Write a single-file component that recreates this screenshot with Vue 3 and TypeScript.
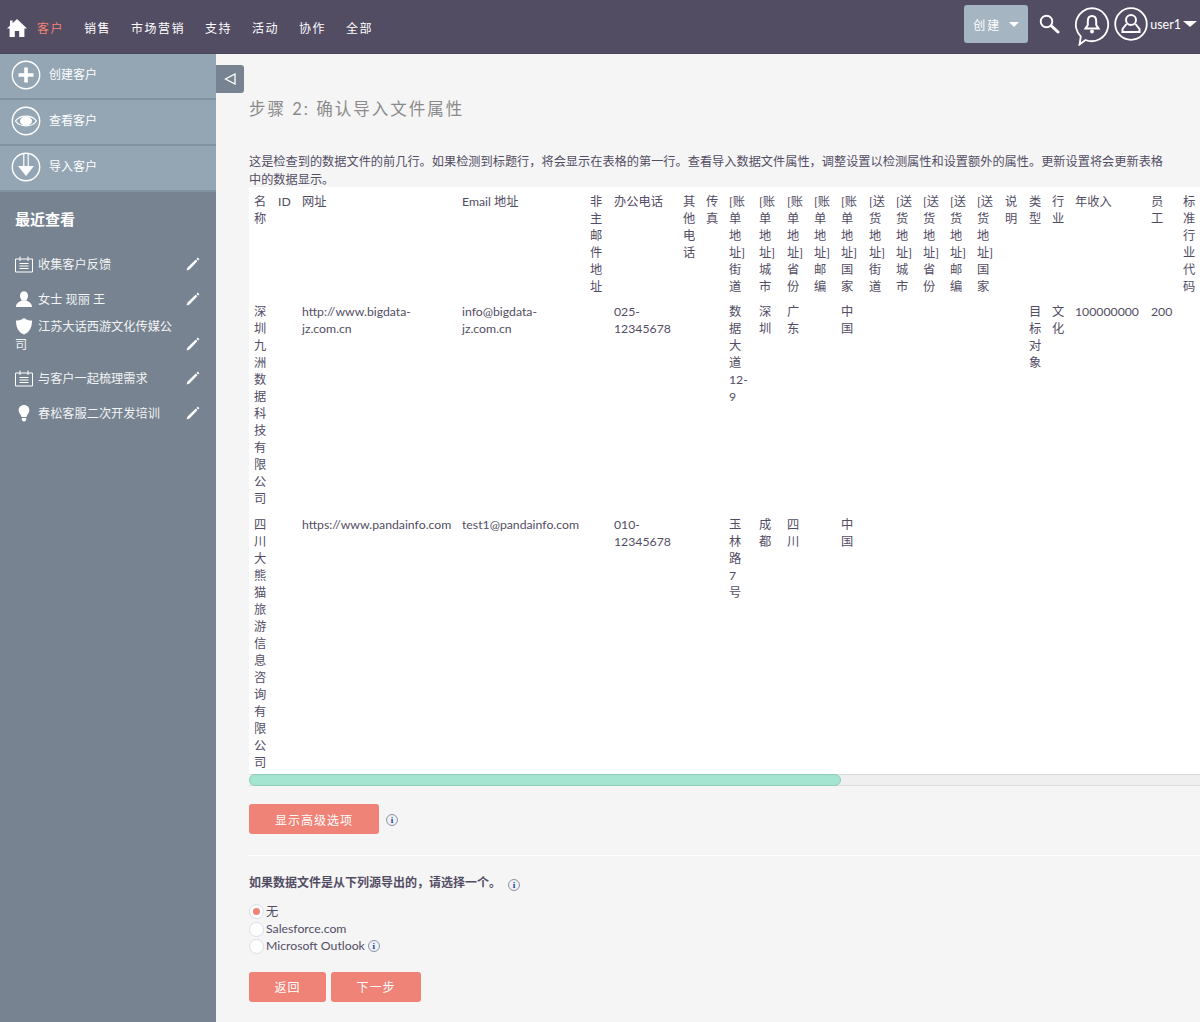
<script setup lang="ts">
const navItems = ['销售', '市场营销', '支持', '活动', '协作', '全部']

const actions = [
  { label: '创建客户', icon: 'plus' },
  { label: '查看客户', icon: 'eye' },
  { label: '导入客户', icon: 'down' },
]

const recent = [
  { label: '收集客户反馈', icon: 'note' },
  { label: '女士 现丽 王', icon: 'person' },
  { label: '江苏大话西游文化传媒公司', icon: 'shield', tall: true },
  { label: '与客户一起梳理需求', icon: 'note' },
  { label: '春松客服二次开发培训', icon: 'bulb' },
]

const colWidths = [24, 24, 160, 128, 24, 69, 23, 23, 30, 28, 27, 27, 28, 27, 27, 27, 27, 28, 24, 23, 23, 76, 32, 24, 574]

const headers = [
  '名称', 'ID', '网址', 'Email 地址', '非主邮件地址', '办公电话', '其他电话', '传真',
  '[账单地址]街道', '[账单地址]城市', '[账单地址]省份', '[账单地址]邮编', '[账单地址]国家',
  '[送货地址]街道', '[送货地址]城市', '[送货地址]省份', '[送货地址]邮编', '[送货地址]国家',
  '说明', '类型', '行业', '年收入', '员工', '标准行业代码', '',
]

const rows = [
  ['深圳九洲数据科技有限公司', '', 'http://www.bigdata-jz.com.cn', 'info@bigdata-jz.com.cn', '', '025-12345678', '', '',
    '数据大道12-9', '深圳', '广东', '', '中国', '', '', '', '', '', '', '目标对象', '文化', '100000000', '200', '', ''],
  ['四川大熊猫旅游信息咨询有限公司', '', 'https://www.pandainfo.com', 'test1@pandainfo.com', '', '010-12345678', '', '',
    '玉林路7号', '成都', '四川', '', '中国', '', '', '', '', '', '', '', '', '', '', '', ''],
]

const sources = ['无', 'Salesforce.com', 'Microsoft Outlook']
</script>

<template>
  <div class="page">
    <header class="topbar">
      <svg class="home" viewBox="0 0 20 20" width="20" height="20">
        <path d="M10 1 L20 10.5 L17.4 10.5 L17.4 19 L12.2 19 L12.2 13 L7.8 13 L7.8 19 L2.6 19 L2.6 10.5 L0 10.5 L3 7.6 L3 2.5 L5.6 2.5 L5.6 5.2 Z" fill="#fff" />
      </svg>
      <nav class="nav">
        <a class="nav-item active">客户</a>
        <a v-for="item in navItems" :key="item" class="nav-item">{{ item }}</a>
      </nav>
      <div class="top-right">
        <button class="create">创建<span class="caret"></span></button>
        <svg class="search" viewBox="0 0 21 20" width="21" height="20">
          <circle cx="7.5" cy="7.5" r="5.8" fill="none" stroke="#fff" stroke-width="1.9" />
          <path d="M12.5 12 L19 18" stroke="#fff" stroke-width="3" stroke-linecap="round" />
        </svg>
        <svg class="bell" viewBox="0 0 36 39" width="36" height="39">
          <path d="M18 1.2 A16.5 16.5 0 1 1 11.5 33 L5.5 37.5 L6.8 29.5 A16.5 16.5 0 0 1 18 1.2 Z" fill="none" stroke="#fff" stroke-width="1.8" />
          <path d="M18 9 C14.8 9 13.8 11.5 13.8 14 L13.8 18 L11.5 21.5 L24.5 21.5 L22.2 18 L22.2 14 C22.2 11.5 21.2 9 18 9 Z" fill="none" stroke="#fff" stroke-width="2" />
          <circle cx="18" cy="24.5" r="2" fill="#fff" />
        </svg>
        <svg class="avatar" viewBox="0 0 34 34" width="34" height="34">
          <circle cx="17" cy="17" r="15.8" fill="none" stroke="#fff" stroke-width="1.8" />
          <circle cx="17" cy="13" r="5" fill="none" stroke="#fff" stroke-width="2" />
          <path d="M12.5 17 L8.5 22 L8.5 25 L25.5 25 L25.5 22 L21.5 17" fill="none" stroke="#fff" stroke-width="2" />
        </svg>
        <span class="username">user1</span><span class="caret user-caret"></span>
      </div>
    </header>

    <div class="body">
      <aside class="sidebar">
        <a v-for="action in actions" :key="action.label" class="action">
          <svg viewBox="0 0 30 30" width="30" height="30">
            <circle cx="15" cy="15" r="13.7" fill="none" stroke="#fff" stroke-width="1.4" />
            <path v-if="action.icon === 'plus'" d="M15 7.5 V22.5 M7.5 15 H22.5" stroke="#fff" stroke-width="3.6" />
            <template v-else-if="action.icon === 'eye'">
              <path d="M4.5 15 C9 8.5 21 8.5 25.5 15 C21 21.5 9 21.5 4.5 15 Z" fill="none" stroke="#fff" stroke-width="1.3" />
              <ellipse cx="15" cy="15" rx="6" ry="4.6" fill="#fff" />
            </template>
            <template v-else>
              <path d="M12.8 1.5 V14 M17.2 1.5 V14" stroke="#fff" stroke-width="1.2" />
              <path d="M7 14 H23 L15 24 Z" fill="#fff" />
            </template>
          </svg>
          <span>{{ action.label }}</span>
        </a>

        <h2 class="recent-title">最近查看</h2>
        <ul class="recent">
          <li v-for="item in recent" :key="item.label" class="recent-item" :class="{ tall: item.tall }">
            <span class="recent-text">
              <svg class="recent-icon" viewBox="0 0 18 18" width="18" height="18">
                <template v-if="item.icon === 'note'">
                  <path d="M0.5 4 H17.5 V17 H0.5 Z" fill="none" stroke="#fff" stroke-width="1" />
                  <path d="M5 1.5 V6 M13 1.5 V6 M4.5 8.5 H13.5 M4.5 11 H13.5 M4.5 13.5 H13.5" stroke="#fff" stroke-width="1" />
                </template>
                <template v-else-if="item.icon === 'person'">
                  <ellipse cx="9" cy="6" rx="4" ry="4.8" fill="#fff" />
                  <path d="M1 17 C1 13 4.5 11.5 6.5 10.5 L11.5 10.5 C13.5 11.5 17 13 17 17 Z" fill="#fff" />
                </template>
                <path v-else-if="item.icon === 'shield'" d="M9 1 C11.5 3 14 3.5 17 3.5 C17 10 15 15 9 17.5 C3 15 1 10 1 3.5 C4 3.5 6.5 3 9 1 Z" fill="#fff" />
                <template v-else>
                  <path d="M9 1 C5.8 1 3.6 3.4 3.6 6.2 C3.6 9 6 10.4 6.6 13 L11.4 13 C12 10.4 14.4 9 14.4 6.2 C14.4 3.4 12.2 1 9 1 Z" fill="#fff" />
                  <path d="M6.8 14 H11.2 V16 L9.8 17.5 H8.2 L6.8 16 Z" fill="#fff" />
                </template>
              </svg>{{ item.label }}
            </span>
            <svg class="pencil" viewBox="0 0 14 14" width="14" height="14">
              <path d="M0.5 13.5 L1.5 10.5 L9.8 2.6 L11.4 4.2 L3.5 12.5 Z M10.5 1.9 L11.8 0.6 L13.4 2.2 L12.1 3.5 Z" fill="#fff" />
            </svg>
          </li>
        </ul>
      </aside>

      <main class="main">
        <button class="collapse" aria-label="collapse">
          <svg viewBox="0 0 12 12" width="12" height="12">
            <path d="M11 1 V11 L1.5 6 Z" fill="none" stroke="#fff" stroke-width="1.3" />
          </svg>
        </button>

        <h1 class="title">步骤 2: 确认导入文件属性</h1>
        <p class="intro">这是检查到的数据文件的前几行。如果检测到标题行，将会显示在表格的第一行。查看导入数据文件属性，调整设置以检测属性和设置额外的属性。更新设置将会更新表格中的数据显示。</p>

        <div class="table-wrap">
          <table class="data">
            <colgroup>
              <col v-for="(w, i) in colWidths" :key="i" :style="{ width: w + 'px' }" />
            </colgroup>
            <thead>
              <tr>
                <th v-for="(h, i) in headers" :key="i">{{ h }}</th>
              </tr>
            </thead>
            <tbody>
              <tr v-for="(row, r) in rows" :key="r">
                <td v-for="(cell, c) in row" :key="c">{{ cell }}</td>
              </tr>
            </tbody>
          </table>
        </div>
        <div class="scroll-track">
          <div class="scroll-thumb"></div>
        </div>

        <div class="advanced">
          <button class="btn wide">显示高级选项</button>
          <span class="info">i</span>
        </div>

        <hr class="divider" />

        <p class="question">如果数据文件是从下列源导出的，请选择一个。<span class="info">i</span></p>

        <div class="sources">
          <label v-for="(s, i) in sources" :key="s" class="source">
            <span class="radio" :class="{ on: i === 0 }"></span>{{ s }}<span v-if="i === 2" class="info small">i</span>
          </label>
        </div>

        <div class="buttons">
          <button class="btn back">返回</button>
          <button class="btn next">下一步</button>
        </div>
      </main>
    </div>
  </div>
</template>

<style scoped>
.page {
  display: flex;
  flex-direction: column;
  height: 1022px;
  font-family: Lato, "Noto Sans CJK SC", sans-serif;
  color: #534d64;
}

.topbar {
  display: flex;
  align-items: center;
  flex: 0 0 54px;
  height: 54px;
  padding-left: 7px;
  box-sizing: border-box;
  background: #534d64;
  border-bottom: 1px solid #4a455a;
}

.home {
  margin-top: 2px;
}

.nav {
  display: flex;
  gap: 20px;
  margin-left: 10px;
  margin-top: 2px;
}

.nav-item {
  color: #fff;
  font-size: 12px;
  letter-spacing: 1.5px;
}

.nav-item.active {
  color: #f08377;
}

.top-right {
  display: flex;
  align-items: center;
  margin-left: auto;
  height: 100%;
  padding: 0 3px 5px 0;
  box-sizing: border-box;
}

.create {
  display: flex;
  align-items: center;
  width: 64px;
  height: 38px;
  margin-right: 11px;
  padding: 0 0 0 9px;
  border: 0;
  border-radius: 3px;
  background: #a5b5c1;
  color: #fff;
  font: 12px Lato, "Noto Sans CJK SC", sans-serif;
  letter-spacing: 2px;
}

.caret {
  display: inline-block;
  width: 0;
  height: 0;
  margin-left: 8px;
  border-left: 5px solid transparent;
  border-right: 5px solid transparent;
  border-top: 5px solid #fff;
}

.search {
  margin-right: 14px;
}

.bell {
  margin-top: 5px;
  margin-right: 4px;
}

.avatar {
  margin-right: 2px;
}

.username {
  color: #fff;
  font-size: 12.5px;
}

.user-caret {
  margin: 0 0 0 2px;
  border-left-width: 7px;
  border-right-width: 7px;
  border-top-width: 6px;
}

.body {
  display: flex;
  flex: 1;
  min-height: 0;
}

.sidebar {
  flex: 0 0 216px;
  background: #778390;
  color: #fff;
}

.action {
  display: flex;
  align-items: center;
  gap: 8px;
  height: 46px;
  padding: 0 0 2px 11px;
  box-sizing: border-box;
  background: #94a6b4;
  border-bottom: 2px solid #7f93a2;
  font-size: 12px;
}

.action span {
  margin-top: -3px;
}

.recent-title {
  margin: 17px 0 0 15px;
  font-size: 15px;
  line-height: 20px;
  font-weight: 700;
}

.recent {
  margin: 0;
  padding: 18px 16px 0 15px;
  list-style: none;
}

.recent-item {
  display: flex;
  align-items: flex-end;
  justify-content: space-between;
  min-height: 35px;
  padding-bottom: 8px;
  box-sizing: border-box;
  font-size: 12.2px;
  line-height: 18px;
  color: #f2f4f5;
}

.recent-item.tall {
  padding-bottom: 0;
  margin-bottom: 6.5px;
}

.recent-text {
  width: 160px;
}

.recent-icon {
  margin-right: 5px;
  vertical-align: -4px;
}

.pencil {
  flex: none;
  margin-bottom: 3px;
}

.main {
  position: relative;
  flex: 1;
  min-width: 0;
  padding-left: 33px;
  background: #f5f5f5;
}

.collapse {
  position: absolute;
  left: 0;
  top: 11px;
  display: flex;
  align-items: center;
  justify-content: center;
  width: 28px;
  height: 28px;
  padding: 0;
  border: 0;
  border-radius: 0 3px 3px 0;
  background: #778390;
}

.title {
  margin: 0;
  padding-top: 43px;
  font-size: 16.5px;
  line-height: 24px;
  font-weight: 400;
  letter-spacing: 2px;
  color: #8a8a8a;
}

.intro {
  margin: 32px 30px -2px 0;
  font-size: 12.2px;
  line-height: 18px;
  color: #534d64;
}

.table-wrap {
  overflow: hidden;
  background: #fff;
}

.scroll-track {
  height: 12px;
  box-sizing: border-box;
  background: #efefef;
  border-top: 1px solid #dcdcdc;
  border-bottom: 1px solid #dcdcdc;
}

.scroll-thumb {
  width: 592px;
  height: 12px;
  margin-top: -1px;
  box-sizing: border-box;
  background: #a3e5d0;
  border: 1px solid #8ccfba;
  border-radius: 6px;
}

.data {
  table-layout: fixed;
  width: 1527px;
  border-collapse: collapse;
  font-size: 12.25px;
  line-height: 17px;
}

.data th,
.data td {
  padding: 6px 6px 3px 5px;
  vertical-align: top;
  text-align: left;
  font-weight: 400;
  color: #534d64;
}

.data th {
  padding-bottom: 2px;
}

.advanced {
  display: flex;
  align-items: center;
  margin-top: 18px;
}

.btn {
  height: 30px;
  padding: 0;
  border: 0;
  border-radius: 3px;
  background: #f08377;
  color: #fff;
  font: 12px Lato, "Noto Sans CJK SC", sans-serif;
  letter-spacing: 1px;
}

.wide {
  width: 130px;
}

.info {
  display: inline-block;
  width: 10px;
  height: 10px;
  margin-left: 7px;
  border: 1px solid #8d96a3;
  border-radius: 50%;
  background: #eef1f5;
  color: #1c3f94;
  font: 700 9px/10px "Liberation Serif", serif;
  text-align: center;
  vertical-align: -1px;
}

.advanced .info {
  margin-top: 2px;
  margin-left: 7px;
}

.divider {
  height: 0;
  margin: 21px 0 0;
  border: 0;
  border-top: 1px solid #fff;
}

.question {
  margin: 18px 0 0;
  font-size: 12px;
  line-height: 18px;
  font-weight: 700;
}

.sources {
  display: flex;
  flex-direction: column;
  margin-top: 10px;
}

.source {
  display: flex;
  align-items: center;
  height: 17.5px;
  font-size: 12.25px;
}

.radio {
  position: relative;
  box-sizing: border-box;
  width: 15px;
  height: 15px;
  margin: 2px 2px 0 0;
  border: 1px solid #d9dfe6;
  border-radius: 50%;
  background: #fff;
}

.radio.on::after {
  content: "";
  position: absolute;
  left: 3px;
  top: 3px;
  width: 7px;
  height: 7px;
  border-radius: 50%;
  background: #f08377;
}

.info.small {
  margin-left: 3px;
}

.buttons {
  display: flex;
  gap: 5px;
  margin-top: 17px;
}

.back {
  width: 77px;
}

.next {
  width: 90px;
}
</style>

<style>
html,
body {
  overflow: hidden;
}
</style>
